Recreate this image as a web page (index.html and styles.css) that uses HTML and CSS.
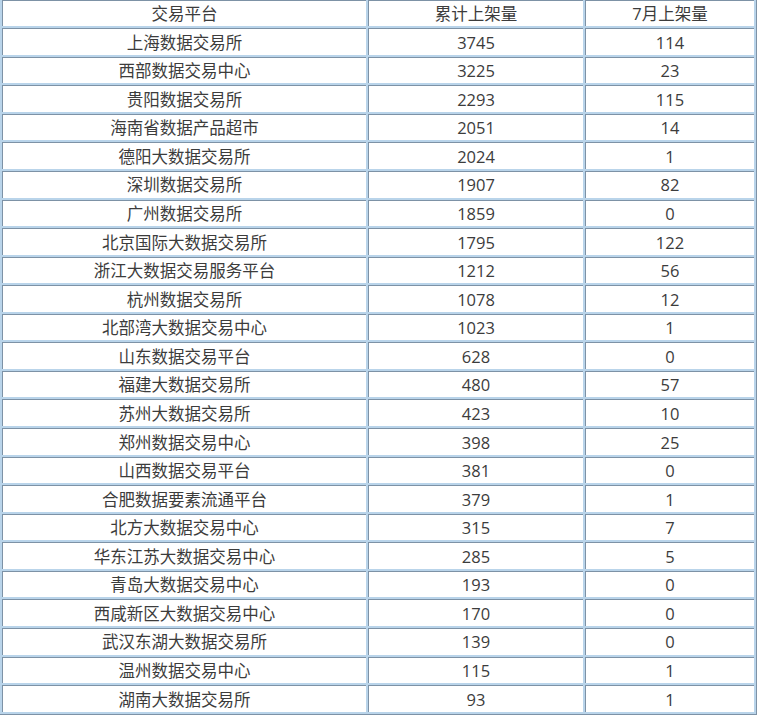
FILE: index.html
```html
<!DOCTYPE html>
<html lang="zh">
<head>
<meta charset="utf-8">
<link rel="stylesheet" href="styles.css">
</head>
<body>
<table class="grid">
  <colgroup><col class="c1"><col class="c2"><col class="c3"></colgroup>
  <tr><td>交易平台</td><td>累计上架量</td><td>7月上架量</td></tr>
  <tr><td>上海数据交易所</td><td>3745</td><td>114</td></tr>
  <tr><td>西部数据交易中心</td><td>3225</td><td>23</td></tr>
  <tr><td>贵阳数据交易所</td><td>2293</td><td>115</td></tr>
  <tr><td>海南省数据产品超市</td><td>2051</td><td>14</td></tr>
  <tr><td>德阳大数据交易所</td><td>2024</td><td>1</td></tr>
  <tr><td>深圳数据交易所</td><td>1907</td><td>82</td></tr>
  <tr><td>广州数据交易所</td><td>1859</td><td>0</td></tr>
  <tr><td>北京国际大数据交易所</td><td>1795</td><td>122</td></tr>
  <tr><td>浙江大数据交易服务平台</td><td>1212</td><td>56</td></tr>
  <tr><td>杭州数据交易所</td><td>1078</td><td>12</td></tr>
  <tr><td>北部湾大数据交易中心</td><td>1023</td><td>1</td></tr>
  <tr><td>山东数据交易平台</td><td>628</td><td>0</td></tr>
  <tr><td>福建大数据交易所</td><td>480</td><td>57</td></tr>
  <tr><td>苏州大数据交易所</td><td>423</td><td>10</td></tr>
  <tr><td>郑州数据交易中心</td><td>398</td><td>25</td></tr>
  <tr><td>山西数据交易平台</td><td>381</td><td>0</td></tr>
  <tr><td>合肥数据要素流通平台</td><td>379</td><td>1</td></tr>
  <tr><td>北方大数据交易中心</td><td>315</td><td>7</td></tr>
  <tr><td>华东江苏大数据交易中心</td><td>285</td><td>5</td></tr>
  <tr><td>青岛大数据交易中心</td><td>193</td><td>0</td></tr>
  <tr><td>西咸新区大数据交易中心</td><td>170</td><td>0</td></tr>
  <tr><td>武汉东湖大数据交易所</td><td>139</td><td>0</td></tr>
  <tr><td>温州数据交易中心</td><td>115</td><td>1</td></tr>
  <tr><td>湖南大数据交易所</td><td>93</td><td>1</td></tr>
</table>
</body>
</html>
```
FILE: styles.css
```css
html, body {
  margin: 0;
  padding: 0;
  background: #ffffff;
}
.grid {
  margin-top: -2.4px;
  width: 757px;
  table-layout: fixed;
  border-collapse: separate;
  border-spacing: 2px;
  background: #b9d4ea;
  border: 0;
  border-right: 1px solid #7d92a6;
  border-bottom: 1px solid #7d92a6;
  font-family: "Open Sans", "Noto Sans CJK SC", sans-serif;
  font-size: 16.5px;
  color: #3c3c3c;
}
.c1 { width: 364px; }
.c2 { width: 215px; }
.c3 { width: 169px; }
.grid td {
  background: #ffffff;
  border-left: 1px solid #7d92a6;
  border-top: 1px solid #7d92a6;
  padding: 1.5px 0 0;
  height: 24.07px;
  line-height: 24.07px;
  text-align: center;
  white-space: nowrap;
  overflow: hidden;
}
```
